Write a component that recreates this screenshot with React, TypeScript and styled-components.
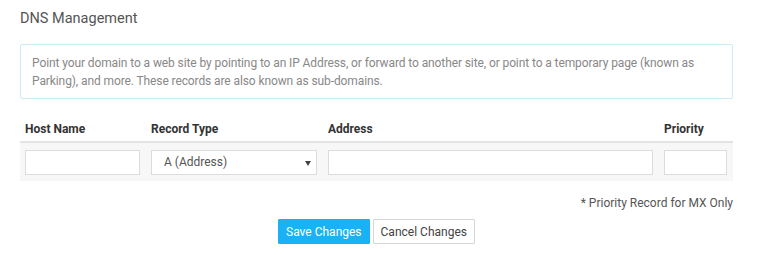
import React from 'react';
import styled, { createGlobalStyle } from 'styled-components';

const GlobalStyle = createGlobalStyle`
    html, body {
        margin: 0;
        padding: 0;
        background: #fff;
    }
    body {
        font-family: Roboto, 'Open Sans', 'DejaVu Sans', sans-serif;
        color: #555;
    }
`;

const Page = styled.div`
    padding: 9px 35px 0 20px;
`;

const Title = styled.h2`
    margin: 0;
    font-size: 14.5px;
    line-height: 19px;
    font-weight: 400;
    color: #555;
`;

const InfoBox = styled.div`
    margin-top: 16px;
    padding: 9px 11px 8px;
    border: 1px solid #c9ecf6;
    border-radius: 2px;
    font-size: 12px;
    line-height: 18px;
    letter-spacing: -0.1px;
    color: #888;
`;

const Grid = styled.div`
    display: grid;
    grid-template-columns: 126px 177px 1fr 74px;
`;

const HeaderRow = styled(Grid)`
    margin-top: 19px;
    border-bottom: 2px solid #e3e3e3;
`;

const HeadCell = styled.div`
    padding: 2px 6px 3px 5px;
    font-size: 12px;
    line-height: 18px;
    font-weight: 700;
    color: #333;
`;

const BodyRow = styled(Grid)`
    background: #f7f7f7;
`;

const Cell = styled.div`
    padding: 7px 6px 6px 5px;
`;

const TextInput = styled.input`
    display: block;
    box-sizing: border-box;
    width: 100%;
    height: 25px;
    margin: 0;
    padding: 0 8px;
    border: 1px solid #dcdcdc;
    border-radius: 0;
    background: #fff;
    font-family: inherit;
    font-size: 12px;
    outline: none;
`;

const SelectBox = styled.div`
    position: relative;
    box-sizing: border-box;
    height: 25px;
    padding: 0 12px;
    border: 1px solid #dcdcdc;
    background: #fff;
    font-size: 12px;
    line-height: 23px;
    color: #555;
`;

const Caret = styled.span`
    position: absolute;
    right: 5px;
    top: 10px;
    width: 0;
    height: 0;
    border-left: 3px solid transparent;
    border-right: 3px solid transparent;
    border-top: 5px solid #444;
`;

const Note = styled.div`
    margin-top: 13px;
    text-align: right;
    font-size: 12px;
    line-height: 18px;
    color: #555;
`;

const Actions = styled.div`
    margin-top: 7px;
    display: flex;
    justify-content: center;
    gap: 3px;
`;

const Button = styled.button<{ $primary?: boolean }>`
    box-sizing: border-box;
    height: 25px;
    padding: 0 7px;
    border: 1px solid ${(p) => (p.$primary ? '#1ab2f5' : '#d6d6d6')};
    border-radius: 1px;
    background: ${(p) => (p.$primary ? '#1ab2f5' : '#fff')};
    color: ${(p) => (p.$primary ? '#fff' : '#444')};
    font-family: inherit;
    font-size: 12px;
    cursor: pointer;
`;

const App = () => {
    return (
        <Page>
            <GlobalStyle />
            <Title>DNS Management</Title>
            <InfoBox>
                Point your domain to a web site by pointing to an IP Address, or forward to another
                site, or point to a temporary page (known as Parking), and more. These records are
                also known as sub-domains.
            </InfoBox>
            <HeaderRow>
                <HeadCell>Host Name</HeadCell>
                <HeadCell>Record Type</HeadCell>
                <HeadCell>Address</HeadCell>
                <HeadCell>Priority</HeadCell>
            </HeaderRow>
            <BodyRow>
                <Cell>
                    <TextInput />
                </Cell>
                <Cell>
                    <SelectBox>
                        A (Address)
                        <Caret />
                    </SelectBox>
                </Cell>
                <Cell>
                    <TextInput />
                </Cell>
                <Cell>
                    <TextInput />
                </Cell>
            </BodyRow>
            <Note>* Priority Record for MX Only</Note>
            <Actions>
                <Button $primary>Save Changes</Button>
                <Button>Cancel Changes</Button>
            </Actions>
        </Page>
    );
};

export default App;
